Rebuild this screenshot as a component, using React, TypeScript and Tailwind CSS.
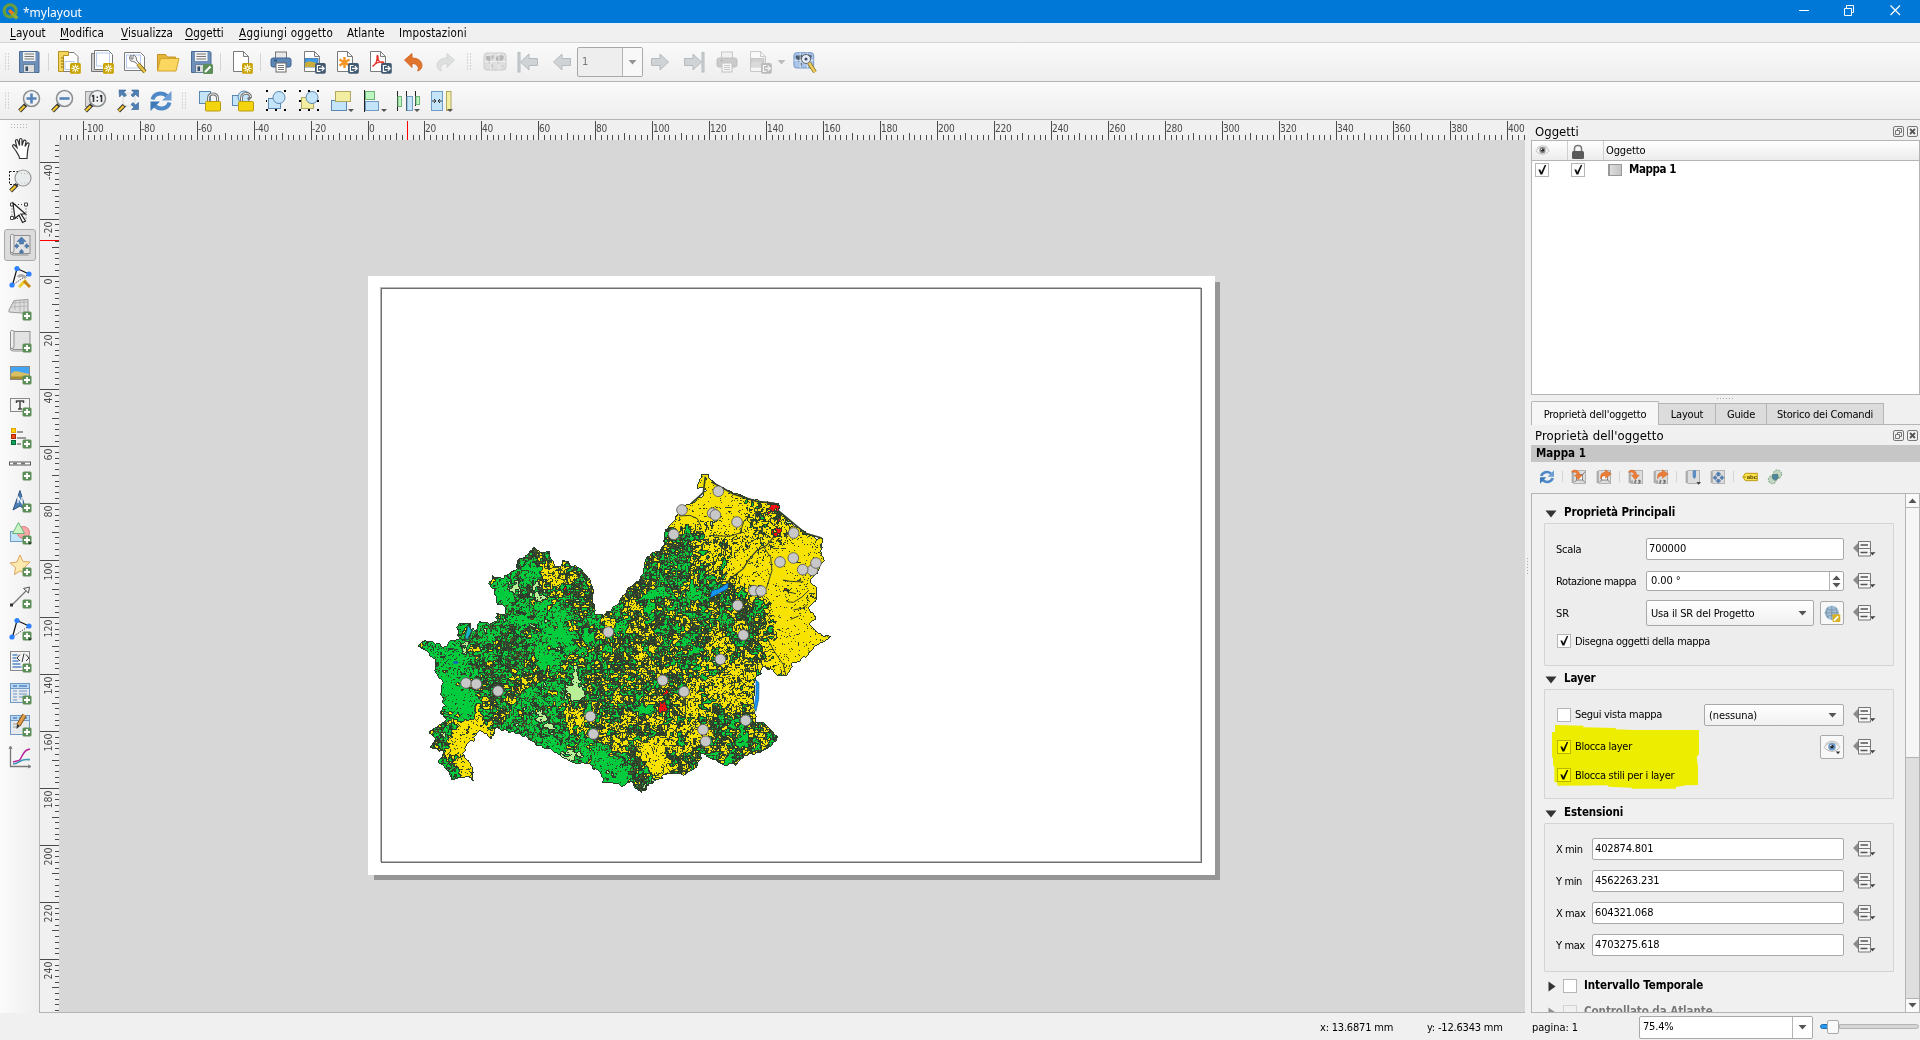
import type { ReactNode } from "react";

const UI = "font-['DejaVu_Sans_Condensed','DejaVu_Sans',sans-serif] [font-stretch:condensed]";

/* ---------- icon primitives ---------- */

function Svg({ children, size = 24, className = "" }: { children: ReactNode; size?: number; className?: string }) {
  return (
    <svg viewBox="0 0 24 24" width={size} height={size} className={"shrink-0 " + className}>
      {children}
    </svg>
  );
}

const Plus = ({ x = 14.5, y = 14.5 }: { x?: number; y?: number }) => (
  <g transform={`translate(${x} ${y})`}>
    <rect width="9" height="9" rx="1.5" fill="#5c8f57" />
    <path d="M4.5 1.5v6M1.5 4.5h6" stroke="#fff" strokeWidth="1.8" />
  </g>
);

const Star = () => (
  <g transform="translate(13 13)">
    <rect width="10.8" height="10.8" rx="1.5" fill="#c7a200" />
    <path d="M5.4 1.3v8.2M1.3 5.4h8.2M2.5 2.5l5.8 5.8M8.3 2.5l-5.8 5.8" stroke="#fffbe0" strokeWidth="1.1" />
    <circle cx="5.4" cy="5.4" r="1.3" fill="#c7a200" stroke="#fff" strokeWidth=".8" />
  </g>
);

const Export = () => (
  <g transform="translate(13 13)">
    <rect width="10.8" height="10.8" rx="1.8" fill="#415a70" />
    <path d="M5.5 2.5H2.4v5.8h3.1M4 5.4h5M6.8 3l2.4 2.4L6.8 7.8" stroke="#fff" strokeWidth="1.2" fill="none" />
  </g>
);

const Sheet = () => <path d="M2.5 1.5h10l5 5v15h-15z M12.5 1.5v5h5" fill="#fff" stroke="#7c7c7c" strokeWidth="1" />;
const Caret = ({ x = 18, y = 20 }: { x?: number; y?: number }) => (
  <path d={`M${x} ${y}h6l-3 3z`} fill="#555" />
);

const Handle = () => <path d="M9 15.5L2.6 22" stroke="#333" strokeWidth="4" />;
const HandleY = () => <path d="M7.6 17L2.8 21.8" stroke="#f3c932" strokeWidth="2.2" />;

const Floppy = () => (
  <>
    <path d="M2.5 1.5h18.500l1 1v20h-19.500z" fill="#6d8fb8" stroke="#4c6c98" />
    <rect x="6" y="2" width="12.500" height="9" fill="#f2f2f2" />
    <path d="M7.500 4h9.500M7.500 6.500h9.500M7.500 9h9.500" stroke="#777" />
    <rect x="6.500" y="14.500" width="11" height="8" fill="#dcdcdc" stroke="#66809f" />
    <rect x="8.500" y="16.500" width="2.500" height="4.500" fill="#35506e" />
  </>
);

const Printer = () => (
  <>
    <rect x="6.500" y="2" width="11" height="8" fill="#e8e8e8" stroke="#777" />
    <rect x="2" y="8" width="20" height="9" rx="2" fill="#5c86b4" stroke="#3e6490" />
    <path d="M5 10.500h3" stroke="#2c4d75" strokeWidth="1.500" />
    <rect x="7" y="13" width="10" height="9" fill="#fff" stroke="#666" />
    <path d="M9 15.500h6M9 17.500h6M9 19.500h6" stroke="#777" />
  </>
);

const Landscape = () => (
  <>
    <rect x="3" y="8.500" width="13" height="8.500" fill="#3f9be6" stroke="#3d6fa0" strokeWidth=".8" />
    <path d="M3 13c4-3 9-1 13 1v3H3z" fill="#c9ae3a" />
  </>
);

const Arrow = ({ flip = false, bar = false }: { flip?: boolean; bar?: boolean }) => (
  <g transform={flip ? "translate(24 0) scale(-1 1)" : undefined} fill="#cfd3d6" stroke="#b4babd">
    {bar && <rect x="2" y="2.500" width="2" height="19.500" />}
    <path d="M4.500 12l8.500-8v4.500h8.500v7H13V20z" />
  </g>
);

const Refresh = () => (
  <g fill="none" stroke="#4f88c6" strokeWidth="4">
    <path d="M3.500 10.500C5 4.500 13 2.500 18 7" />
    <path d="M20.500 13.500C19 19.500 11 21.500 6 17" />
    <path d="M22.500 2v9.500h-9.500z" fill="#6d9dd2" stroke="none" />
    <path d="M1.500 22v-9.500h9.500z" fill="#3d78ba" stroke="none" />
  </g>
);

const Lens = ({ children }: { children?: ReactNode }) => (
  <>
    <Handle />
    <HandleY />
    <circle cx="14.500" cy="9.500" r="8" fill="#f0f2f3" stroke="#8d9092" strokeWidth="1.600" />
    {children}
  </>
);

const Roll = ({ w = 16 }: { w?: number }) => (
  <>
    <rect x="5" y="2.500" width={w + 1} height="18" fill="#e2e2e2" stroke="#8f8f8f" />
    <path d="M2.500 2.500c0-1.500 3.500-1.500 3.500 0V18c0 1-3.500 1-3.500 3z" fill="#eee" stroke="#8f8f8f" />
    <path d="M2.500 20.500c.5 1.200 2 1.500 4 1.500h14" stroke="#8f8f8f" fill="none" />
  </>
);

const Nodes = () => (
  <>
    <path d="M4.500 20L9 3.500 21 9" stroke="#111" fill="none" strokeWidth="1.200" />
    <path d="M21 9L4.500 20" stroke="#111" strokeDasharray="1 1.500" />
    <g fill="#2f82ff">
      <circle cx="9" cy="3.500" r="2.600" />
      <circle cx="21" cy="9" r="2.600" />
      <circle cx="4" cy="20" r="2.600" />
    </g>
  </>
);

const Table = () => (
  <>
    <rect x="2.500" y="2.500" width="19" height="19" fill="#e6eaee" stroke="#6f98c4" />
    <rect x="3" y="3" width="18" height="4" fill="#b7d7f0" />
    <path d="M5 5h4M11 5h8" stroke="#5688c4" strokeWidth="1.500" />
    <path d="M3 7.500h18" stroke="#6f98c4" />
  </>
);

const Corners = () => (
  <path
    d="M2 1h2v2H2zM11 1h2v2h-2zM20 1h2v2h-2zM2 11h2v2H2zM20 11h2v2h-2zM2 20h2v2H2zM11 20h2v2h-2zM20 20h2v2h-2z"
    fill="#000"
  />
);

const Cross4 = () => (
  <path
    d="M12.500 4l4 4h-2.200v2.500h-3.600V8H8.500zM12.500 21l4-3.500h-2.200v-2h-3.600v2H8.500zM4.500 13l3.500-3.500v2h2v3H8v2zM21 13l-3.500-3.500v2h-2v3h2v2z"
    fill="#4d7fb5"
    stroke="#355f92"
    strokeWidth=".5"
  />
);

const World = () => (
  <>
    <rect x="1" y="3" width="22" height="17" rx="3" fill="#a9c5ea" stroke="#6c8fc2" />
    <path d="M3 6h4l3-1 1 2-2 3-2 1v3l-2-3-2-2zM13 7l4-2 4 1-1 4-3 1-1 4-2-4-1-1zM8 14l2 1-1 4zM19 15l2 1-1 1z" fill="#4b5e70" />
    <path d="M1 11.500h22M8 3v17M16 3v17" stroke="#eaf2fb" strokeWidth=".8" />
  </>
);

/* ---------- toolbars ---------- */

const fileIcons: ReactNode[] = [
  <Floppy />,
  null,
  <>
    <path d="M6 2.500h11l4 4v15H6z" fill="#fff" stroke="#7c7c7c" />
    <path d="M8 11.500h9v8H8z" fill="none" stroke="#b8c9f0" />
    <path d="M1.500 1.500h10v4h-5v16h-5z" fill="#f3d65a" stroke="#b4922a" />
    <path d="M4 8h2.500M4 11h2.500M4 14h2.500M4 17h2.500" stroke="#8a6b10" />
    <Star />
  </>,
  <>
    <path d="M1.500 3.500h15l4 4v14h-19z" fill="#ccc" stroke="#777" />
    <path d="M4.500.5h14l4 4v15h-18z" fill="#fff" stroke="#777" />
    <rect x="6.500" y="3" width="13" height="13" fill="none" stroke="#b8c9f0" />
    <Star />
  </>,
  <>
    <path d="M1.500 2.500h16l4 4v14h-20z" fill="#fff" stroke="#7c7c7c" />
    <rect x="3.500" y="5" width="14" height="13" fill="none" stroke="#b8c9f0" />
    <path d="M8 5a4 4 0 0 0 0 6l4 1 9 10 2-2-9-9-1-4a4 4 0 0 0-3-2v4H8z" fill="#f4f4f4" stroke="#777" />
    <path d="M15 14l7 8" stroke="#7b6510" strokeWidth="4" />
    <path d="M15 14l7 8" stroke="#e8c34a" strokeWidth="2.500" />
  </>,
  <>
    <path d="M1.500 20V4.500h8l2 2.500h8v3" fill="#e3b53a" stroke="#c49320" />
    <path d="M1.500 21l3-12.500H23L20 21z" fill="#fbd75f" stroke="#d3a32c" />
  </>,
  <>
    <Floppy />
    <rect x="14" y="14" width="10" height="10" rx="1.500" fill="#5c8f57" />
    <path d="M16 22l5.500-5.500" stroke="#fff" strokeWidth="2.200" />
  </>,
  null,
  <>
    <path d="M4.500 1.500h10l5 5v15h-15z M14.500 1.500v5h5" fill="#fff" stroke="#7c7c7c" />
    <Star />
  </>,
  null,
  <Printer />,
  <>
    <Sheet />
    <Landscape />
    <Export />
  </>,
  <>
    <Sheet />
    <path d="M9.500 7v11M4.500 9.500l10 6M14.500 9.500l-10 6" stroke="#f79421" strokeWidth="2.400" />
    <Export />
  </>,
  <>
    <Sheet />
    <path d="M4.500 16.500c3-2 5-6 4.500-10 0-1.500 1-1.500 1 0C9.500 11 12 13 15 13c1 0 1-1 0-1-3-.500-8 1-10.500 4.500" stroke="#e8332a" fill="none" strokeWidth="1.300" />
    <Export />
  </>,
  <path d="M3.500 10L11 3.500V8c6 0 10 3 10 7.500 0 3-2 5-4.500 5.500 1-1.500 1-3 .5-4-1-2.500-3-3.500-6-3.500v4z" fill="#e2752d" stroke="#cc5c18" strokeWidth=".8" />,
  <path d="M20.500 10L13 3.500V8C7 8 3 11 3 15.500c0 3 2 5 4.500 5.500-1-1.500-1-3-.5-4 1-2.500 3-3.500 6-3.500v4z" fill="#dedfdf" stroke="#d0d2d2" strokeWidth=".8" />,
];

const zoomIcons: ReactNode[] = [
  <Lens>
    <path d="M14.500 4.500v10M9.500 9.500h10" stroke="#5583b8" strokeWidth="2.600" />
  </Lens>,
  <Lens>
    <path d="M9.500 9.500h10" stroke="#5583b8" strokeWidth="2.600" />
  </Lens>,
  <>
    <rect x="2.500" y="2.500" width="12" height="15" fill="#dcdcdc" stroke="#999" />
    <Lens>
      <path d="M10.500 6v7M9 7.500l1.500-1.300M18.500 6v7M17 7.500l1.500-1.300" stroke="#333" strokeWidth="1.600" fill="none" />
      <path d="M14.300 7.500v1.500M14.300 11v1.500" stroke="#333" strokeWidth="1.500" />
    </Lens>
  </>,
  <>
    <Handle />
    <HandleY />
    <rect x="7" y="4" width="12" height="13" rx="4" fill="#f4f4f4" stroke="#ddd" />
    <path d="M3 1h7L8 3.500l2.500 2.500-2 2L6 5.500 3.500 8zM22.500 1h-7L18 3.500 15 6l2 2 2.500-2.500 3 2.500zM22.500 20.500h-7l2.500-2.500-3-2.500 2-2 2.500 2.500 3-2.500z" fill="#4d7fb5" stroke="#355f92" strokeWidth=".6" />
  </>,
  <Refresh />,
];

const Padlock = ({ open = false }: { open?: boolean }) => (
  <>
    <path d={open ? "M10.500 12V9c0-6 9-6 9-1l-2.500 2.500" : "M10.500 12V9c0-5.500 9-5.500 9 0v3"} fill="none" stroke="#777" strokeWidth="3" />
    <path d={open ? "M10.500 12V9c0-6 9-6 9-1" : "M10.500 12V9c0-5.500 9-5.500 9 0v3"} fill="none" stroke="#eee" strokeWidth="1" />
    <rect x="7.500" y="12.500" width="15" height="9.500" rx="1" fill="#f2d40f" stroke="#b99b12" />
  </>
);

const arrangeIcons: ReactNode[] = [
  <>
    <rect x="1.500" y="2.500" width="11" height="12" fill="#c4e4f9" stroke="#5b88b0" />
    <Padlock />
  </>,
  <>
    <rect x="1.500" y="6.500" width="11" height="10" fill="#c4e4f9" stroke="#5b88b0" />
    <circle cx="13" cy="8" r="6" fill="#c4e4f9" stroke="#5b88b0" />
    <Padlock open />
  </>,
  <>
    <rect x="4.500" y="9.500" width="12" height="10" fill="#c4e4f9" stroke="#5b88b0" />
    <circle cx="15" cy="8.500" r="6" fill="#c4e4f9" stroke="#5b88b0" />
    <path d="M2 1h2v2H2zM20 1h2v2h-2zM2 20h2v2H2zM11 20h2v2h-2zM20 20h2v2h-2zM2 11h1v2H2z" fill="#000" />
  </>,
  <>
    <rect x="4.500" y="8.500" width="12" height="11" fill="#f3eda2" stroke="#b0a860" />
    <circle cx="15" cy="8.500" r="6" fill="#c4e4f9" stroke="#5b88b0" />
    <Corners />
  </>,
  <>
    <rect x="1.500" y="11.500" width="15" height="10" fill="#c4e4f9" stroke="#5b88b0" />
    <rect x="5.500" y="2.500" width="15" height="10" fill="#f3eda2" stroke="#b0a860" />
    <Caret />
  </>,
  <>
    <path d="M1.500 1v22" stroke="#222" />
    <rect x="2.500" y="2.500" width="9" height="8" fill="#bdf5c0" stroke="#6db37a" />
    <rect x="2.500" y="12.500" width="13" height="9" fill="#c4e4f9" stroke="#6f9cc4" />
    <Caret />
  </>,
  <>
    <path d="M1.500 2v20M10.500 2v20M19.500 2v15" stroke="#222" />
    <rect x="2" y="7.500" width="3.500" height="10" fill="#bdf5c0" stroke="#6db37a" />
    <rect x="11" y="7.500" width="5.500" height="14" fill="#c4e4f9" stroke="#6f9cc4" />
    <rect x="20" y="7.500" width="3.500" height="8" fill="#bdf5c0" stroke="#6db37a" />
    <Caret />
  </>,
  <>
    <rect x="2.500" y="2.500" width="11" height="19" fill="#c4e4f9" stroke="#6f9cc4" />
    <rect x="17.500" y="2.500" width="4.500" height="19" fill="#f3eda2" stroke="#b0a860" />
    <path d="M3 12h4M5 10l2 2-2 2M13 12H9M11 10l-2 2 2 2" stroke="#333" fill="none" />
    <Caret />
  </>,
];

const toolIcons: ReactNode[] = [
  <path d="M7.500 14L4.500 10c-1.500-2 1-3 2-1.500l2 2-1.500-6C6.500 2.500 9 2 9.500 4l1.500 4.500V3c0-2 2.500-2 2.500 0v5.500L15 4c.5-1.500 2.500-1 2.500.5l-1 5 2-3c1-1 2.500-.500 2 1-1.500 4-1.500 7-2 14H11c0-3-2-4.500-3.500-7.500z" fill="#fff" stroke="#333" strokeWidth="1.200" transform="translate(.5 0)" />,
  <>
    <rect x="1.500" y="2.500" width="14" height="13" fill="none" stroke="#111" strokeDasharray="2 1.500" />
    <Handle />
    <HandleY />
    <circle cx="15" cy="9" r="8" fill="#e9ecec" stroke="#999" strokeWidth="1.200" />
    <path d="M13 4.500h7M13 14h7" stroke="#bbb" strokeDasharray="1 2" />
  </>,
  <>
    <path d="M4 3.500h14v14H4z" fill="none" stroke="#444" strokeDasharray="1 2" />
    <path d="M2.500 2h3v3h-3zM16.500 2h3v3h-3zM2.500 15.500h3v3h-3z" fill="#fff" stroke="#444" />
    <path d="M5 2l12.500 11h-4.500l4.500 7-3 1.500-3.500-7.500L7 17.500z" fill="#fff" stroke="#222" strokeWidth="1.200" />
  </>,
  <>
    <Roll />
    <path
      d="M13.500 4l4.500 4.500h-2.500V11h-4V8.500H9zM11.800 20v-2l1.700-1.700 1.700 1.700v2zM7 12h1.500v-1.500L11 13l-2.500 2.500V14H7zM20.500 12H19v-1.500L16.500 13l2.500 2.500V14h1.500z"
      fill="#4d7fb5"
      stroke="#355f92"
      strokeWidth=".5"
    />
  </>,
  <>
    <Nodes />
    <path d="M10 12c3-3 6-1 8 1" stroke="#aaa" strokeWidth="3" fill="none" />
    <path d="M11 22l7-7" stroke="#f0cd2a" strokeWidth="3" />
    <path d="M22 22l-6-6" stroke="#c78610" strokeWidth="3" />
  </>,
  <>
    <path d="M1 13L6 3.500l14-1v14L1 15z" fill="#ddd" stroke="#999" />
    <path d="M3 10l17-1M5 6l15-1M7 3v10M12 3v12M16 3v13" stroke="#aaa" strokeWidth=".7" />
    <Plus />
  </>,
  <>
    <Roll />
    <Plus />
  </>,
  <>
    <rect x="2.500" y="5.500" width="19" height="13" fill="#42a5f5" stroke="#888" />
    <path d="M3 13c3-5 8-2 18 0v5H3z" fill="#d8bf63" />
    <path d="M3 15.500h18v2.500H3z" fill="#a78d2c" />
    <Plus />
  </>,
  <>
    <rect x="2.500" y="5.500" width="19" height="13" fill="#f4f4f4" stroke="#888" />
    <path d="M8.500 10V8h7v2M12 8v8M10 16h4" stroke="#444" fill="none" strokeWidth="1.500" />
    <Plus />
  </>,
  <>
    <rect x="3.500" y="3.500" width="4" height="4" fill="#ffd500" stroke="#e0a000" />
    <rect x="3.500" y="9.500" width="4" height="4" fill="#f04a12" stroke="#a32a00" />
    <rect x="3.500" y="15.500" width="4" height="4" fill="#12a35c" stroke="#066b38" />
    <path d="M9 7h6M9 13h9M9 19h4" stroke="#999" strokeWidth="2" />
    <Plus />
  </>,
  <>
    <rect x="1.500" y="5" width="21" height="3" fill="#fff" stroke="#555" />
    <path d="M5 6.500h4M13 6.500h4" stroke="#777" strokeWidth="2" />
    <Plus />
  </>,
  <>
    <path d="M12 1.500l6 20-6-4.500-7 4z" fill="#4d7fb5" stroke="#2f5580" />
    <path d="M10 14V8l4 6V8" stroke="#fff" fill="none" strokeWidth="1.300" />
    <Plus />
  </>,
  <>
    <rect x="2.500" y="10.500" width="14" height="10" fill="#c4e4f9" stroke="#6f9cc4" />
    <circle cx="15.500" cy="11.500" r="6" fill="#f9a8a8" stroke="#de7777" />
    <path d="M10.500 1.500l6 11h-12z" fill="#c9f5c4" stroke="#6db37a" />
    <Plus />
    <path d="M20 21.500h4l-2 2z" fill="#222" />
  </>,
  <>
    <path d="M12 2l3 6.500 7 .5-5 5 1 6.500-6-2.500-5.500 3.500 1-7-5.500-4.500 7-1z" fill="#fbe9b0" stroke="#dda55c" />
    <Plus />
  </>,
  <>
    <path d="M4 20L20 4" stroke="#777" strokeWidth="1.200" />
    <path d="M21.500 2l-1 6-5-4.500z" fill="#eee" stroke="#555" />
    <rect x="2" y="18.500" width="3" height="3" fill="#333" />
    <Plus />
  </>,
  <>
    <Nodes />
    <Plus />
    <path d="M20 21.500h4l-2 2z" fill="#222" />
  </>,
  <>
    <rect x="2.500" y="2.500" width="19" height="19" fill="#f4f4f4" stroke="#888" />
    <path d="M4.500 6h5M4.500 9h4M4.500 12h6M4.500 15h8M4.500 18h9" stroke="#5688c4" strokeWidth="1.600" />
    <path d="M12 5.500L9 9l3 3M18 5.500L21 9l-3 3M16 4.500L14 13" stroke="#333" fill="none" />
    <Plus />
  </>,
  <>
    <Table />
    <path d="M5 10h4M11 10h8M5 13h4M11 13h8M5 16h4M11 16h4M5 19h4" stroke="#6f98c4" />
    <Plus />
  </>,
  <>
    <Table />
    <path d="M5 11h6M5 14h4" stroke="#999" />
    <path d="M16.500 2l-6 10" stroke="#7a4a12" strokeWidth="4.500" />
    <path d="M16.500 2l-6 10" stroke="#e2a04a" strokeWidth="3" />
    <path d="M8.500 16l.5-5 3 2z" fill="#333" />
    <Plus />
  </>,
  <>
    <path d="M2.500 2v19.500h20" stroke="#777" strokeWidth="1.300" fill="none" />
    <path d="M1 4l1.500-3L4 4M20 20l3 1.500-3 1.500" stroke="#777" fill="none" />
    <path d="M5 17c7-2 6 0 9-6s5-6 8-7" stroke="#b8269b" strokeWidth="1.600" fill="none" />
    <path d="M5 19c5 0 6-3 10-4s5 0 7-.500" stroke="#3d9bb5" strokeWidth="1.600" fill="none" />
  </>,
];

const Mini = ({ children, arrow, digits }: { children?: ReactNode; arrow?: "in" | "out"; digits?: boolean }) => (
  <>
    <rect x="4" y="2.500" width="18" height="19" fill="#ddd" stroke="#999" />
    <path d="M2 3v18" stroke="#aaa" strokeWidth="2" />
    {digits ? (
      <path d="M6 17v4M10 17h2v2h-2v2h2M15 17h3v2h-2M18 17v4h-3" stroke="#444" fill="none" />
    ) : (
      arrow && (
        <>
          <rect x="8.500" y="8.500" width="9" height="8" fill="#fff" stroke="#555" />
          <path d="M5 20l3.500-3.500M21 20l-3.500-3.500M21 4l-3.500 4.500" stroke="#555" />
        </>
      )
    )}
    {arrow === "in" && <path d="M1 5c0-5 12-5 12 4h4l-6 7-6-7h4c0-4-4-5-8-4z" fill="#ea7d38" stroke="#cf5c14" strokeWidth=".6" />}
    {arrow === "out" && <path d="M7 15C6 8 9 5 14 5V1l9 6.500L14 14v-4c-3 0-6 1-7 5z" fill="#ea7d38" stroke="#cf5c14" strokeWidth=".6" />}
    {children}
  </>
);

const propIcons: ReactNode[] = [
  <Refresh />,
  null,
  <Mini arrow="in" />,
  <Mini arrow="out" />,
  null,
  <Mini arrow="in" digits />,
  <Mini arrow="out" digits />,
  null,
  <Mini>
    <path d="M11.500 2h5v10l-2.500 3-2.500-3z" fill="#5c8cc0" />
    <path d="M17 19.500h7l-3.500 4z" fill="#444" />
  </Mini>,
  <Mini>
    <Cross4 />
  </Mini>,
  null,
  <>
    <path d="M1 12l4-5.500h18v11H5z" fill="#fbe14a" stroke="#b8960c" strokeWidth="1.400" />
    <circle cx="4.500" cy="12" r="1" fill="#7a6000" />
    <text x="7" y="15.500" fontSize="9" fontFamily="Liberation Sans" fontWeight="700" fill="#554300">abc</text>
  </>,
  <>
    <circle cx="15.500" cy="8" r="6.500" fill="#c2d6c3" stroke="#6f9a72" strokeWidth="1.500" strokeDasharray="2.500 2" />
    <circle cx="8" cy="16" r="6" fill="#c2d6c3" stroke="#6f9a72" strokeWidth="1.500" strokeDasharray="2.500 2" />
    <path d="M8 8.500l8-.5 1 6-5 3-4-3z" fill="#4f86a5" stroke="#3c7356" />
  </>,
];

const Sep = ({ h = "h-[18px]" }: { h?: string }) => <div className={"w-px bg-[#d4d4d4] " + h} />;

function Grip({ className = "" }: { className?: string }) {
  return (
    <svg width="6" height="18" className={"shrink-0 " + className}>
      {[0, 1, 2, 3, 4, 5].map((i) => (
        <g key={i} fill="#b5b5b5">
          <rect x="0" y={i * 3 + 0.5} width="1" height="1" />
          <rect x="3" y={i * 3 + 0.5} width="1" height="1" />
        </g>
      ))}
    </svg>
  );
}

function IconRow({ items }: { items: ReactNode[] }) {
  return (
    <>
      {items.map((ic, i) =>
        ic === null ? (
          <div key={i} className="flex w-[7px] shrink-0 justify-center">
            <Sep />
          </div>
        ) : (
          <div key={i} className="flex w-[33px] shrink-0 justify-center">
            <Svg>{ic}</Svg>
          </div>
        ),
      )}
    </>
  );
}

function Menu() {
  const items: [string, string, string][] = [
    ["L", "ayout", "w-[50px] tracking-[0.1px]"],
    ["M", "odifica", "w-[61px] tracking-[0.1px]"],
    ["V", "isualizza", "w-[64px] tracking-[0.1px]"],
    ["O", "ggetti", "w-[54px]"],
    ["A", "ggiungi oggetto", "w-[108px] tracking-[0.3px]"],
    ["", "Atlante", "w-[52px] tracking-[0.1px]"],
    ["", "Impostazioni", "w-[80px] tracking-[0.15px]"],
  ];
  return (
    <nav className="flex h-[19px] items-center bg-[#f0f0f0] pt-[2px] pl-[10px] text-[11.500px] leading-none text-black">
      {items.map(([u, t, w]) => (
        <div key={t} className={"shrink-0 whitespace-nowrap " + w}>
          <span className="underline underline-offset-2">{u}</span>
          {t}
        </div>
      ))}
    </nav>
  );
}

/* ---------- rulers ---------- */

const MM = 2.8475;

function HRuler() {
  const w = 1466;
  const origin = 309.01;
  const ticks: ReactNode[] = [];
  for (let mm = -108; mm <= 406; mm += 2) {
    const x = Math.floor(origin + mm * MM) + 0.5;
    if (x > w) break;
    const major = mm % 20 === 0;
    const top = major ? 1 : mm % 10 === 0 ? 13 : 15;
    ticks.push(<path key={mm} d={`M${x} ${top}V20`} stroke="#4a4a4a" />);
    if (major)
      ticks.push(
        <text key={"t" + mm} x={x + 0.5} y="11.500" fontSize="10" letterSpacing="-0.2" fill="#4a4a4a">
          {mm}
        </text>,
      );
  }
  return (
    <svg width={w} height="20" className="block">
      {ticks}
      <path d="M348.500 1V20" stroke="#ff0000" />
    </svg>
  );
}

function VRuler() {
  const h = 872;
  const origin = 136.01;
  const ticks: ReactNode[] = [];
  for (let mm = -46; mm <= 260; mm += 2) {
    const y = Math.floor(origin + mm * MM) + 0.5;
    if (y > h || y < 0) continue;
    const major = mm % 20 === 0;
    const left = major ? 0 : mm % 10 === 0 ? 12 : 15;
    ticks.push(<path key={mm} d={`M${left} ${y}H19`} stroke="#4a4a4a" />);
    if (major)
      ticks.push(
        <text key={"t" + mm} transform={`translate(11.500 ${y + 2}) rotate(-90)`} textAnchor="end" fontSize="10.500" fill="#4a4a4a">
          {mm}
        </text>,
      );
  }
  return (
    <svg width="19" height={h} className="block">
      {ticks}
      <path d="M0 100.500H19" stroke="#ff0000" />
    </svg>
  );
}

/* ---------- land cover map ---------- */

const OUTLINE = [
  886,80,903,40,920,44,935,60,960,76,1000,97,1040,111,1090,124,1137,129,1133,152,1160,173,1185,193,1215,218,1245,230,1270,236,1262,265,
  1272,300,1258,325,1240,348,1230,360,1249,385,1246,420,1228,445,1247,475,1228,490,1245,508,1262,520,1294,530,1268,546,1240,560,1225,582,
  1195,600,1175,612,1160,648,1130,643,1110,628,1085,622,1075,645,1060,665,1064,720,1064,755,1068,785,1090,785,1110,805,1135,832,1110,860,
  1080,878,1030,888,1005,912,975,915,940,900,905,880,890,925,850,945,810,940,760,960,725,997,705,987,690,965,665,975,610,965,600,935,
  570,915,520,905,470,880,430,862,400,848,375,828,320,812,285,805,275,838,240,806,225,830,205,852,188,880,214,908,224,964,200,950,
  155,957,140,930,112,905,125,875,86,860,105,835,80,815,110,795,135,780,118,755,132,735,118,700,125,665,105,635,108,610,85,575,53,553,
  70,541,110,547,135,560,150,540,175,535,168,505,185,487,212,489,218,515,232,505,235,478,270,490,290,480,285,460,310,465,318,445,
  290,430,285,405,264,370,275,345,310,350,345,325,350,300,380,285,402,256,420,275,446,274,462,315,485,320,488,296,510,312,540,322,
  570,355,578,405,585,440,580,458,610,460,650,430,680,385,700,375,725,340,735,290,775,270,790,245,792,210,825,175,835,140,870,130,
  905,105,915,90,
];

/* x, y, share of farmland, density of parcel borders */
const ZONES: number[][] = [
  [1150,450,1,.03],[1000,190,1,.06],[1180,280,1,.03],[1200,560,1,.05],[1120,350,1,.03],[930,120,1,.03],[880,160,1,.05],[1040,310,1,.1],[960,270,.82,.5],[1020,240,.96,.3],
  [1090,190,.85,.8],[1130,560,1,.15],[1150,210,.9,.5],[860,250,.5,.85],[800,320,.32,1],[760,370,.32,1],[900,370,.45,.9],[900,450,.45,1],[750,450,.58,.85],
  [640,500,.6,.8],[1000,440,.5,1],[1040,480,.45,1],[880,560,.38,.95],[1060,560,.6,.85],[700,580,.6,.9],[820,650,.66,.9],[1010,680,.9,.4],[940,570,.7,.5],[600,650,.5,1],
  [430,500,.1,.6],[550,500,.3,.85],[350,550,.25,.9],[150,620,0,.2],[250,540,.16,.65],[180,730,0,.02],[280,740,.6,.9],[400,640,.36,.95],[460,580,.08,.35],[270,640,.2,.9],
  [350,780,.12,.75],[200,830,1,.04],[165,860,1,.08],[110,830,.1,.9],[150,930,.15,.9],[198,915,1,.1],[450,800,.2,.75],[520,780,.7,.45],[620,740,.62,.9],[500,690,.3,.8],
  [600,890,.06,.35],[650,940,0,.1],[480,860,0,.3],[680,900,.2,.9],[760,900,1,.1],[850,820,.72,.8],[850,900,.65,.9],[720,690,.45,1],[950,800,.55,.95],[1040,830,.45,1],
  [1110,830,.5,1],[720,780,.62,.95],[890,730,.7,.6],[400,290,.4,1],[370,340,.05,.6],[470,345,.9,.4],[300,380,.04,.35],[380,420,.2,.8],
  [500,400,.35,.95],[550,390,.45,1],[450,450,.06,.3],[720,960,.3,1],[660,860,.75,.6],
];

/* x, y, rx, ry, cover class of single large parcels */
const PARCELS: number[][] = [
  [747,430,10,60,1],[765,400,30,12,1],[878,392,16,32,1],[895,410,24,9,1],[725,745,34,12,1],[880,570,26,14,1],[470,525,34,30,1],[560,530,18,18,1],
  [1028,830,12,26,1],[990,900,14,10,1],[645,950,40,20,1],[635,905,34,16,1],[400,325,24,14,1],[310,405,20,22,1],[370,480,34,12,1],[430,600,26,30,1],
  [528,640,12,30,3],[525,690,30,24,3],[420,768,12,16,3],[450,800,18,12,3],[518,882,34,12,3],[344,372,12,24,3],[412,404,24,10,3],[408,370,14,8,3],[190,560,10,14,3],
  [930,180,7,12,3],[632,940,7,5,3],[735,980,10,6,3],[1168,185,8,6,3],
  [1115,142,20,10,4],[1130,168,5,10,4],[1128,215,9,14,4],[793,697,8,10,4],[790,738,13,12,4],[354,675,5,10,4],[156,832,6,7,4],[207,803,9,3,4],[496,391,6,4,4],
  [1045,250,5,8,4],[595,835,5,3,4],[1120,528,8,3,4],[1148,388,8,3,4],[1003,652,6,4,4],
];

const hash = (x: number, y: number, s: number) => {
  let h = (x * 374761393 + y * 668265263 + s * 974634777) | 0;
  h = Math.imul(h ^ (h >>> 13), 1274126177);
  h = Math.imul(h ^ (h >>> 15), 2246822519);
  return ((h ^ (h >>> 16)) >>> 0) / 4294967296;
};

function noise(x: number, y: number, s: number) {
  const xi = Math.floor(x);
  const yi = Math.floor(y);
  const fx = x - xi;
  const fy = y - yi;
  const u = fx * fx * (3 - 2 * fx);
  const v = fy * fy * (3 - 2 * fy);
  const a = hash(xi, yi, s) * (1 - u) + hash(xi + 1, yi, s) * u;
  const b = hash(xi, yi + 1, s) * (1 - u) + hash(xi + 1, yi + 1, s) * u;
  return a * (1 - v) + b * v;
}

function inside(px: number, py: number) {
  let c = false;
  const n = OUTLINE.length;
  for (let i = 0, j = n - 2; i < n; j = i, i += 2) {
    const xi = OUTLINE[i], yi = OUTLINE[i + 1], xj = OUTLINE[j], yj = OUTLINE[j + 1];
    if (yi > py !== yj > py && px < ((xj - xi) * (py - yi)) / (yj - yi) + xi) c = !c;
  }
  return c;
}

function buildLandCover() {
  const W = 440, H = 340;
  const cls = new Uint8Array(W * H);
  const dens = new Float32Array(W * H);
  for (let y = 0; y < H; y++)
    for (let x = 0; x < W; x++) {
      const jx = (noise(x / 3.5, y / 3.5, 11) - 0.5) * 15;
      const jy = (noise(x / 3.5, y / 3.5, 12) - 0.5) * 15;
      const X = x * 3 + jx;
      const Y = y * 3 + jy;
      if (!inside(x * 3 + jx * 0.6, y * 3 + jy * 0.6)) continue;
      let sw = 0, sy = 0, sd = 0;
      for (const z of ZONES) {
        const d = (z[0] - X) ** 2 + (z[1] - Y) ** 2 + 150;
        const w = 1 / (d * d);
        sw += w;
        sy += z[2] * w;
        sd += z[3] * w;
      }
      const share = sy / sw;
      let k = sd / sw;
      const n = noise(x / 7, y / 7, 1) * 0.5 + noise(x / 2.6, y / 2.6, 2) * 0.5;
      const r = (n - 0.5) * 1.6 + 0.5;
      let c = r < share || share > 0.95 ? 2 : 1;
      if (c === 1 && share < 0.8 && noise(x / 4, y / 4, 5) > 0.9) c = 3;
      if (noise(x / 2.5, y / 2.5, 8) > 0.985) c = 4;
      for (const p of PARCELS) {
        const e = ((X + jx - p[0]) / p[2]) ** 2 + ((Y + jy - p[1]) / p[3]) ** 2;
        if (e < 1) {
          c = p[4];
          k = 0.05;
        }
      }
      cls[y * W + x] = c;
      dens[y * W + x] = k;
    }
  const paths = ["", "", "", "", "", "", ""];
  for (let y = 0; y < H; y++) {
    let run = 0, start = 0;
    for (let x = 0; x <= W; x++) {
      let c = x < W ? cls[y * W + x] : 0;
      if (c) {
        const i = y * W + x;
        const l = cls[i - 1], r = cls[i + 1], u = cls[i - W], d = cls[i + W];
        const clump = noise(x / 9, y / 9, 6);
        const k = dens[i] * (0.35 + 1.3 * clump);
        const rim = !l || !r || !u || !d;
        const edge = l !== c || u !== c;
        const ridge = Math.abs(noise(x / 2.6, y / 2.6, 3) - 0.5) < k * 0.13;
        const vein = Math.abs(noise(x / 4.5, y / 4.5, 7) - 0.5) < k * 0.07;
        const fleck = hash(x, y, 9) < k * 0.12;
        const streak = dens[i] < 0.2 && noise(x / 4, y / 1.6, 4) > 0.92;
        if (rim || edge) c = 5;
        else if (ridge || vein || fleck || streak) c = hash(x, y, 10) < 0.7 ? 5 : 6;
      }
      if (c !== run) {
        if (run) paths[run] += `M${start} ${y}h${x - start}v1h${start - x}z`;
        run = c;
        start = x;
      }
    }
  }
  return paths;
}

const LAND = buildLandCover();
const LAND_FILL = ["", "#00cc3d", "#f7e200", "#b9ef96", "#f01010", "#2c3f2c", "#4a5a2c"];

const STATIONS = [
  [955,94],[846,150],[938,160],[946,165],[1011,186],[821,223],[1181,219],[1140,306],[1180,294],[1237,331],[1248,309],[1208,329],[1062,392],[1083,393],
  [1013,436],[1030,525],[625,516],[961,598],[788,661],[852,695],[198,669],[229,672],[294,693],[571,769],[580,822],[1037,781],[909,809],[917,844],
];

function LandMap() {
  return (
    <svg width="440" height="340" viewBox="0 0 440 340">
      <g shapeRendering="crispEdges">
        {LAND.map((d, i) => (d ? <path key={i} d={d} fill={LAND_FILL[i]} /> : null))}
      </g>
      <g transform="scale(.33333)">
        <g fill="none" stroke="#33402c" strokeWidth="3">
          <path d="M916 50l-6 48-36 32M935 66l65 36 70 22 55 6M1135 152l50 42 32 26 48 14" strokeWidth="5" />
          <path d="M1122 230l-22 26-30 16-26 30-14 24-32 24-20 20" strokeWidth="4" />
          <path d="M1092 262l20 30 4 40-16 50-16 24" />
          <path d="M840 168l30-2 22 10 12 26M1050 165l-18 18-12 36-32 10-50-2M1000 392l-14-14" />
          <path d="M1150 360l20 4 40 2M1160 425l20 2 26-16 20-20M1180 450l30-6 14-12M1160 395l28 6M1172 478l24-10M760 470l34 4 36 10 32 14" />
          <path d="M1100 530l20 40 30 44 6 26" />
        </g>
        <path d="M985 368l-28 18-22 6-5 22 28-14 26-14z" fill="#1496f5" stroke="#1c3a60" strokeWidth="2" />
        <path d="M1068 660l9 8-1 50-8 36-6-10 6-40z" fill="#1496f5" stroke="#1c5a90" strokeWidth="2" />
        <path d="M205 495l10 18-14 28-6-10z" fill="#19b8c8" stroke="#1c3a40" strokeWidth="2" />
        <path d="M160 604h14v7h-14z" fill="#1558c8" />
        <g fill="#c8c8c8" stroke="#5a5a5a" strokeWidth="2.600">
          {STATIONS.map(([x, y]) => (
            <circle key={x} cx={x} cy={y} r="16" />
          ))}
        </g>
      </g>
    </svg>
  );
}

/* ---------- form pieces ---------- */

function Check({ on = false, gray = false }: { on?: boolean; gray?: boolean }) {
  return (
    <div className={"size-[14px] shrink-0 border border-[#b6b6b6] " + (gray ? "bg-[#f0f0f0]" : "bg-white")}>
      {on && (
        <svg viewBox="0 0 12 12" width="12" height="12">
          <path d="M2.300 5.500h2l1 2.500 3.500-7h1.500L6.300 10.500H4.500z" fill="#111" />
        </svg>
      )}
    </div>
  );
}

const Override = () => (
  <svg width="24" height="20" className="ml-[9px] shrink-0">
    <path d="M6 3v12l-6-6z" fill="#8b8b8b" />
    <path d="M5.500 2.500h12v14.500h-12z" fill="#f6f6f6" stroke="#777" />
    <path d="M5 9.500h13" stroke="#777" />
    <path d="M7.500 6h7.500M7.500 13.500h7" stroke="#555" strokeWidth="1.600" />
    <path d="M16 13h7l-3.500 3.500z" fill="#444" stroke="#eee" strokeWidth=".5" />
  </svg>
);

const field = "flex shrink-0 items-center rounded-[2px] border border-[#a9a9a9] whitespace-nowrap ";

function Heading({ text, className }: { text: string; className: string }) {
  return (
    <div className={"flex items-center pl-[13px] " + className}>
      <svg width="12" height="8" className="mt-[2px]">
        <path d="M.5 .5h11L6 7.500z" fill="#333" />
      </svg>
      <span className="ml-[7px] text-[11.500px] font-bold tracking-[-0.1px]">{text}</span>
    </div>
  );
}

const groupBox = "ml-[12px] w-[350px] border border-[#d4d4d4] bg-[#ededed] pt-[9px] pl-[11px] rounded-[1px] ";
const DownTri = ({ className = "" }: { className?: string }) => (
  <svg width="9" height="5" className={"shrink-0 " + className}>
    <path d="M.5 0h8l-4 4.500z" fill="#555" />
  </svg>
);

const Eye = ({ color = "#5580a8" }: { color?: string }) => (
  <>
    <path d="M1.500 12.500C6 4.500 18 4.500 22.500 12.500 17 19.500 7 19.500 1.500 12.500z" fill="#f7f7f7" stroke="#9d9d9d" />
    <path d="M3 8.500C8 3 17 3 21 8.500" fill="none" stroke="#aaa" />
    <circle cx="12" cy="11.500" r="5" fill={color} />
    <circle cx="12" cy="11.500" r="2.200" fill="#222" />
    <circle cx="10.500" cy="10" r="1" fill="#fff" />
  </>
);

const DockButtons = () => (
  <div className="flex gap-[3px]">
    <svg width="11" height="11">
      <rect x=".5" y=".5" width="10" height="10" rx="1.500" fill="none" stroke="#777" />
      <path d="M4.500 4V2.500h4v4H7M2.500 4.500h4v4h-4z" fill="none" stroke="#777" />
    </svg>
    <svg width="11" height="11">
      <rect x=".5" y=".5" width="10" height="10" rx="1.500" fill="none" stroke="#777" />
      <path d="M3 3l5 5M8 3L3 8" stroke="#555" strokeWidth="1.800" />
    </svg>
  </div>
);

function ObjectsPanel() {
  return (
    <section className="flex h-[275px] flex-col">
      <div className="flex h-[20px] items-center justify-between pr-[2px] pl-[4px]">
        <span className="pt-[2px] text-[13px] leading-none">Oggetti</span>
        <div className="pt-[2px]">
          <DockButtons />
        </div>
      </div>
      <div className="flex flex-1 flex-col border border-[#b4b4b4] bg-white">
        <div className="flex h-[20px] border-b border-[#b4b4b4] bg-gradient-to-b from-white to-[#ececec]">
          <div className="flex w-[36px] items-center border-r border-[#cfcfcf] pl-[3px]">
            <Svg size={15}>
              <Eye color="#888" />
            </Svg>
          </div>
          <div className="flex w-[36px] items-end border-r border-[#cfcfcf] pb-px pl-[4px]">
            <svg width="12" height="15">
              <path d="M2.500 8V4.500c0-4 7-4 7 0V8" fill="none" stroke="#777" strokeWidth="1.500" />
              <rect x="0" y="7" width="12" height="8" rx="1.500" fill="#5a5a5a" />
            </svg>
          </div>
          <span className="pt-[3px] pl-[2px] text-[11px] leading-[14px] tracking-[-0.1px]">Oggetto</span>
        </div>
        <div className="flex h-[18px] items-center pl-[3px]">
          <Check on />
          <div className="ml-[22px]">
            <Check on />
          </div>
          <div className="ml-[23px] h-[12px] w-[14px] border border-[#999] border-l-2 bg-gradient-to-r from-[#ddd] to-[#c4c4c4]" />
          <span className="ml-[7px] text-[11.500px] font-bold tracking-[-0.400px]">Mappa 1</span>
        </div>
      </div>
    </section>
  );
}

function Tabs() {
  const tab = "flex items-center justify-center border-t border-r border-[#b4b4b4] bg-[#dcdcdc] h-[22px] border-b pt-[3px] ";
  return (
    <div className="flex h-[24px] items-end text-[11px] tracking-[-0.200px] whitespace-nowrap">
      <div className="flex h-[24px] w-[128px] items-center justify-center rounded-t-[2px] border border-b-0 border-[#b4b4b4] bg-[#f6f6f6] pt-[3px]">
        Proprietà dell'oggetto
      </div>
      <div className={tab + "w-[57px]"}>Layout</div>
      <div className={tab + "w-[51px]"}>Guide</div>
      <div className={tab + "w-[117px]"}>Storico dei Comandi</div>
      <div className="flex-1 border-b border-[#b4b4b4]" />
    </div>
  );
}

function PropIcons() {
  return (
    <div className="flex h-[31px] shrink-0 items-center pb-[2px] pl-[3px]">
      {propIcons.map((ic, i) =>
        ic === null ? (
          <div key={i} className="flex w-[7px] shrink-0 justify-center">
            <Sep h="h-[11px]" />
          </div>
        ) : (
          <div key={i} className="flex w-[25px] shrink-0 justify-center">
            <Svg size={16}>{ic}</Svg>
          </div>
        ),
      )}
    </div>
  );
}

function PropertiesForm() {
  return (
    <div className="flex h-[520px] border border-r-0 border-[#b4b4b4] text-[11px] tracking-[-0.100px]">
      <div className="w-[373px] shrink-0 overflow-hidden">
        <Heading text="Proprietà Principali" className="h-[29px] pt-[9px]" />
        <div className={groupBox + "h-[143px]"}>
          <div className="flex h-[32px] items-center">
            <span className="w-[90px] pt-[2px] tracking-[-0.250px]">Scala</span>
            <div className={field + "h-[22px] w-[198px] bg-white pt-px pl-[2px]"}>700000</div>
            <Override />
          </div>
          <div className="flex h-[32px] items-center">
            <span className="w-[90px] pt-[2px] tracking-[-0.400px] whitespace-nowrap">Rotazione mappa</span>
            <div className={field + "h-[20px] w-[198px] justify-between bg-white pl-[4px]"}>
              <span className="pt-px">0.00 °</span>
              <div className="flex h-full w-[14px] flex-col items-center justify-center gap-[3px] border-l border-[#b4b4b4]">
                <DownTri className="rotate-180" />
                <DownTri />
              </div>
            </div>
            <Override />
          </div>
          <div className="flex h-[32px] items-center">
            <span className="w-[90px] pt-[2px]">SR</span>
            <div className={field + "h-[26px] w-[168px] justify-between bg-gradient-to-b from-white to-[#f0f0f0] pr-[6px] pl-[4px]"}>
              <span className="pt-[2px] tracking-[-0.150px]">Usa il SR del Progetto</span>
              <DownTri />
            </div>
            <div className={field + "ml-[6px] h-[24px] w-[24px] justify-center bg-[#f8f8f8]"}>
              <Svg size={17}>
                <circle cx="11" cy="11" r="10" fill="#9cc0dc" />
                <path d="M1 11h20M11 1v20M4 5c4 3 10 3 14 0M4 17c4-3 10-3 14 0M6 3c-3 5-3 11 0 16M16 3c3 5 3 11 0 16" stroke="#7b8790" fill="none" />
                <rect x="12" y="13" width="11" height="11" rx="1.500" fill="#d9b223" />
                <path d="M14 22l6-6" stroke="#fff" strokeWidth="2.500" />
              </Svg>
            </div>
            <Override />
          </div>
          <div className="flex h-[24px] items-center gap-[4px] pl-px">
            <Check on />
            <span className="pt-[2px] tracking-[-0.300px]">Disegna oggetti della mappa</span>
          </div>
        </div>

        <Heading text="Layer" className="h-[23px] pt-[3px]" />
        <div className={groupBox + "relative h-[110px]"}>
          <div className="flex h-[32px] items-center">
            <div className="flex w-[148px] items-center gap-[4px] pb-px pl-px">
              <Check />
              <span className="pt-[2px] tracking-[-0.300px]">Segui vista mappa</span>
            </div>
            <div className={field + "h-[22px] w-[140px] justify-between bg-gradient-to-b from-white to-[#f0f0f0] pr-[6px] pl-[4px]"}>
              <span className="pt-[2px]">(nessuna)</span>
              <DownTri />
            </div>
            <Override />
          </div>
          <div className="flex h-[32px] items-center">
            <div className="flex w-[264px] items-center gap-[4px] pb-px pl-px">
              <Check on />
              <span className="pt-[2px] tracking-[-0.300px]">Blocca layer</span>
            </div>
            <div className={field + "h-[24px] w-[24px] justify-center bg-[#f8f8f8]"}>
              <Svg size={18}>
                <Eye color="#6a96c4" />
                <path d="M17 18h6l-3 3.500z" fill="#333" />
              </Svg>
            </div>
            <Override />
          </div>
          <div className="flex h-[24px] items-center gap-[4px] pl-px">
            <Check on />
            <span className="pt-[2px] tracking-[-0.300px]">Blocca stili per i layer</span>
          </div>
          <svg width="150" height="66" viewBox="0 0 450 198" className="absolute top-[33px] left-[5px] mix-blend-multiply">
            <path
              d="M15 6L100 8V13L197 15V19L250 21H447V93L440 103L444 131V186L410 187L378 192V197H245V194L175 191V187L22 188V179L13 177V131L9 127V105L6 103V27H15z"
              fill="#ffff00"
            />
          </svg>
        </div>

        <Heading text="Estensioni" className="h-[24px] pt-[4px]" />
        <div className={groupBox + "h-[149px]"}>
          {[
            ["X min", "402874.801"],
            ["Y min", "4562263.231"],
            ["X max", "604321.068"],
            ["Y max", "4703275.618"],
          ].map(([k, v]) => (
            <div key={k} className="flex h-[32px] items-center">
              <span className="w-[36px] pt-[2px] tracking-[-0.400px] whitespace-nowrap">{k}</span>
              <div className={field + "h-[22px] w-[252px] bg-white pt-px pl-[2px] tracking-[-0.150px]"}>{v}</div>
              <Override />
            </div>
          ))}
        </div>

        {["Intervallo Temporale", "Controllato da Atlante"].map((t, i) => (
          <div key={t} className={"flex items-center pl-[16px] " + (i ? "h-[26px] opacity-50" : "h-[27px] pt-px")}>
            <svg width="8" height="11">
              <path d="M.5 .5v10l7-5z" fill="#333" />
            </svg>
            <div className="ml-[7px]">
              <Check gray={i === 1} />
            </div>
            <span className="ml-[7px] text-[11.500px] font-bold tracking-[-0.05px]">{t}</span>
          </div>
        ))}
      </div>
      <div className="flex w-[15px] flex-col border-x border-[#b4b4b4] bg-[#dedede]">
        <div className="flex h-[14px] items-center justify-center border-b border-[#b4b4b4] bg-[#fafafa]">
          <DownTri className="rotate-180" />
        </div>
        <div className="h-[250px] border-b border-[#b4b4b4] bg-[#f6f6f6]" />
        <div className="flex-1" />
        <div className="flex h-[14px] items-center justify-center border-t border-[#b4b4b4] bg-[#fafafa]">
          <DownTri />
        </div>
      </div>
    </div>
  );
}

function StatusBar() {
  return (
    <footer className="flex h-[27px] items-center text-[11px] tracking-[-0.200px] whitespace-nowrap">
      <span className="ml-[1320px] w-[107px] pt-[3px]">x: 13.6871 mm</span>
      <span className="w-[105px] pt-[3px]">y: -12.6343 mm</span>
      <span className="w-[107px] pt-[3px] tracking-[-0.050px]">pagina: 1</span>
      <div className={field + "mt-[2px] h-[23px] w-[174px] justify-between bg-white pl-[3px]"}>
        75.4%
        <div className="flex h-full w-[20px] items-center justify-center border-l border-[#b4b4b4]">
          <DownTri />
        </div>
      </div>
      <div className="ml-[7px] flex w-[99px] items-center">
        <div className="h-[5px] w-[8px] rounded-l-sm border border-[#1b6fb5] bg-[#2a95ea]" />
        <div className="-ml-px h-[14px] w-[12px] shrink-0 rounded-[2px] border border-[#a9a9a9] bg-[#fafafa]" />
        <div className="h-[5px] flex-1 rounded-r-sm border border-[#b4b4b4] bg-[#d6d6d6]" />
      </div>
    </footer>
  );
}

export default function App() {
  return (
    <div className={"flex h-[1040px] w-[1920px] flex-col overflow-hidden bg-[#f0f0f0] text-black " + UI}>
      <header className="flex h-[23px] shrink-0 items-center bg-[#0078d7] text-white">
        <Svg size={17} className="ml-[2px]">
          <circle cx="11.500" cy="11" r="8.500" fill="none" stroke="#6a9e3c" strokeWidth="4.500" />
          <path d="M12 12l9.500 10" stroke="#8fae3a" strokeWidth="5" />
          <path d="M10 10l5 5" stroke="#ee7913" strokeWidth="4.500" />
        </Svg>
        <span className="ml-[4px] pt-[2px] font-['Noto_Sans',sans-serif] text-[12px] leading-none">*mylayout</span>
        <svg width="104" height="11" className="ml-auto mr-[18px] mb-[2px]" fill="none" stroke="#fff">
          <path d="M1 5.500h10" />
          <path d="M46.500 3.500h7v7h-7zM48.500 3V.5h7v7H54" />
          <path d="M92.500 .5l9.500 9.500M102 .5L92.500 10" strokeWidth="1.200" />
        </svg>
      </header>
      <Menu />

      <div className="flex h-[40px] shrink-0 items-center border-t border-b border-t-[#d4d4d4] border-b-[#b4b4b4] bg-gradient-to-b from-[#fafafa] to-[#eeeeee]">
        <Grip className="ml-[5px] mr-px" />
        <IconRow items={fileIcons} />
        <div className="flex w-[16px] justify-center">
          <Grip />
        </div>
        <div className="flex opacity-40 grayscale">
          <IconRow items={[<World />]} />
        </div>
        <IconRow items={[<Arrow bar />, <Arrow />]} />
        <div className={field + "mr-px h-[30px] w-[66px] justify-between bg-[#eee] pl-[4px] text-[11px] text-[#777]"}>
          1
          <div className="flex h-full w-[20px] items-center justify-center border-l border-[#b4b4b4] bg-[#f8f8f8]">
            <DownTri className="opacity-60" />
          </div>
        </div>
        <IconRow items={[<Arrow flip />, <Arrow flip bar />]} />
        <div className="flex items-center opacity-35 grayscale">
          <IconRow items={[<Printer />, <><Sheet /><Landscape /><Export /></>]} />
          <DownTri className="ml-px mr-[2px]" />
        </div>
        <IconRow
          items={[
            <>
              <g transform="scale(.9)">
                <World />
              </g>
              <circle cx="13" cy="9" r="4.500" fill="#e4eefa" stroke="#666" />
              <circle cx="13" cy="9" r="1.500" fill="#446" />
              <path d="M16 13l6 9" stroke="#7b6510" strokeWidth="4" />
              <path d="M16 13l6 9" stroke="#f0cd5a" strokeWidth="2.500" />
            </>,
          ]}
        />
      </div>

      <div className="flex h-[38px] shrink-0 items-center border-b border-[#b4b4b4] bg-gradient-to-b from-[#fafafa] to-[#eeeeee]">
        <Grip className="ml-[5px] mr-px" />
        <IconRow items={zoomIcons} />
        <div className="flex w-[16px] justify-center">
          <Grip />
        </div>
        <IconRow items={arrangeIcons} />
      </div>

      <div className="flex h-[893px] shrink-0">
        <aside className="flex w-[40px] shrink-0 flex-col items-center border-r border-[#b4b4b4] bg-gradient-to-r from-[#fbfbfb] to-[#eeeeee]">
          <div className="flex h-[13px] items-center">
            <svg width="17" height="5">
              {[0, 1, 2, 3, 4, 5].map((i) => (
                <path key={i} d={`M${i * 3} .5h1M${i * 3} 3.500h1`} stroke="#b5b5b5" />
              ))}
            </svg>
          </div>
          {toolIcons.map((ic, i) => (
            <div
              key={i}
              className={
                "flex h-[32px] w-[32px] shrink-0 items-center justify-center " +
                (i === 3 ? "rounded-[3px] border border-[#a9a9a9] bg-[#dcdcdc]" : "")
              }
            >
              <Svg>{ic}</Svg>
            </div>
          ))}
        </aside>

        <main className="flex w-[1485px] shrink-0 flex-col border-b border-[#b4b4b4]">
          <div className="h-[20px] shrink-0 pl-[19px]">
            <HRuler />
          </div>
          <div className="flex">
            <VRuler />
            <div className="relative h-[872px] w-[1466px] overflow-hidden bg-[#d7d7d7]">
              <div className="absolute top-[142px] left-[315px] h-[598px] w-[846px] bg-[#969696]" />
              <div className="absolute top-[136px] left-[309px] h-[599px] w-[847px] bg-white">
                <div className="absolute top-[11px] left-[12px] h-[575px] w-[821px] border border-[#b8b8b8]" />
                <div className="absolute top-[12px] left-[13px] h-[575px] w-[821px] border border-[#6e6e6e]" />
              </div>
              <div className="absolute top-[320px] left-[341px]">
                <LandMap />
              </div>
            </div>
          </div>
        </main>

        <div className="flex w-[6px] shrink-0 items-center justify-center">
          <svg width="2" height="18">
            {[0, 1, 2, 3, 4, 5].map((i) => (
              <rect key={i} x="0" y={i * 3} width="1" height="1" fill="#aaa" />
            ))}
          </svg>
        </div>

        <div className="flex w-[389px] shrink-0 flex-col">
          <ObjectsPanel />
          <div className="flex h-[6px] items-center justify-center">
            <svg width="17" height="1">
              {[0, 1, 2, 3, 4, 5].map((i) => (
                <rect key={i} x={i * 3} y="0" width="1" height="1" fill="#aaa" />
              ))}
            </svg>
          </div>
          <Tabs />
          <div className="flex h-[20px] items-center justify-between pr-[2px] pl-[4px]">
            <span className="pt-px text-[13px] leading-none tracking-[0.100px] whitespace-nowrap">Proprietà dell'oggetto</span>
            <DockButtons />
          </div>
          <div className="flex h-[17px] shrink-0 items-center bg-[#c6c6c6] pt-px pl-[5px] text-[11.500px] font-bold">Mappa 1</div>
          <PropIcons />
          <PropertiesForm />
        </div>
      </div>

      <StatusBar />
    </div>
  );
}
